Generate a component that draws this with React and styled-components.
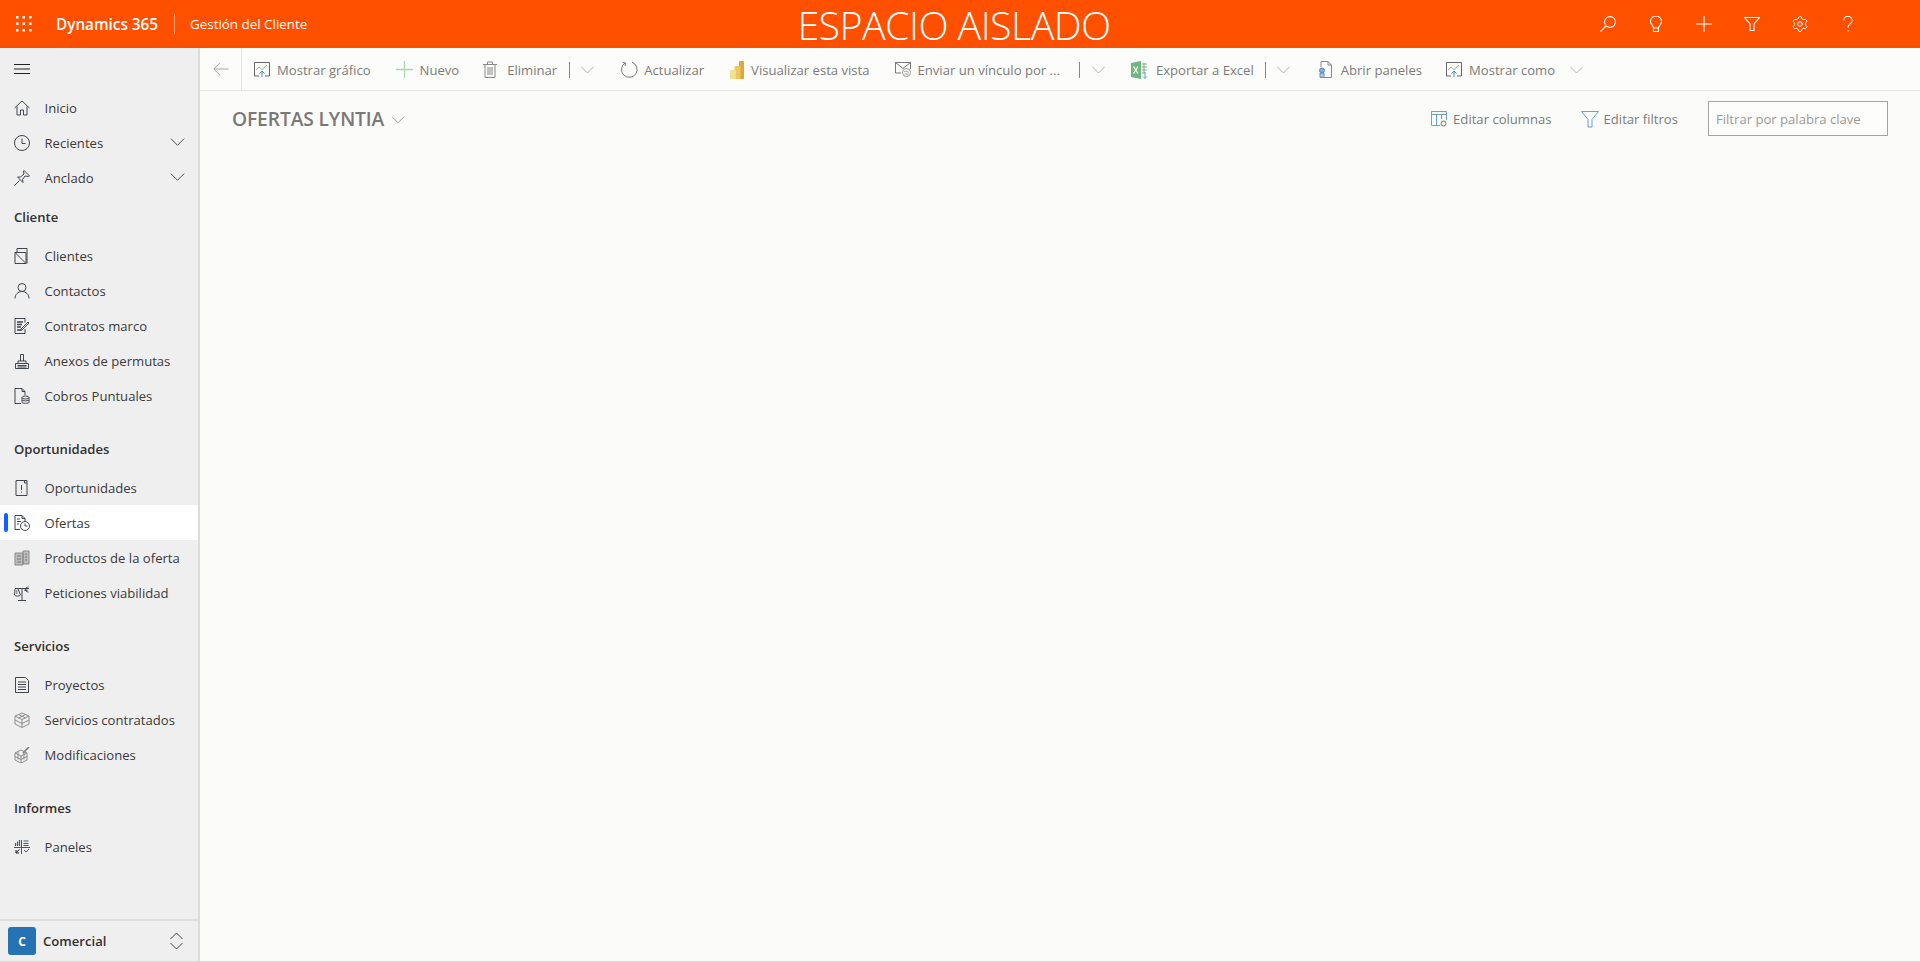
import React from 'react';
import styled, { createGlobalStyle } from 'styled-components';
import { Settings } from 'lucide-react';

const Global = createGlobalStyle`
  html, body { margin: 0; padding: 0; height: 100%; overflow: hidden; }
  body { font-family: "Open Sans", "Noto Sans", sans-serif; background: #faf9f7; }
  #root { height: 962px; }
  * { box-sizing: border-box; }
`;

const Page = styled.div`display:flex;flex-direction:column;width:1920px;height:962px;border-bottom:1px solid #d8d8d8;`;
const Header = styled.header`position:relative;flex:0 0 48px;height:48px;background:#ff5000;color:#fff;display:flex;align-items:center;`;
const Waffle = styled.div`width:48px;height:48px;display:flex;align-items:center;justify-content:center;`;
const Brand = styled.div`font-size:15.3px;font-weight:600;margin-left:8px;width:118px;padding-bottom:1px;`;
const Divider = styled.div`width:1px;height:20px;background:rgba(255,255,255,.45);`;
const AppName = styled.div`font-size:13.4px;margin-left:15px;`;
const Sandbox = styled.div`position:absolute;left:0;width:1920px;top:0;height:48px;line-height:50px;text-align:center;font-size:39.4px;font-weight:300;font-family:"Open Sans",sans-serif;letter-spacing:-.55px;padding-right:12px;`;
const HeaderIcons = styled.div`margin-left:auto;margin-right:48px;display:flex;position:relative;`;
const HeaderIcon = styled.div`width:48px;height:48px;display:flex;align-items:center;justify-content:center;`;

const Body = styled.div`flex:1;display:flex;min-height:0;`;
const Side = styled.nav`width:200px;flex:0 0 200px;background:#efefef;border-right:2px solid #dcdcdc;display:flex;flex-direction:column;color:#323130;`;
const Burger = styled.div`height:42px;padding:0 14px;display:flex;align-items:center;`;
const SideScroll = styled.div`flex:1;`;
const Row = styled.div`position:relative;height:35px;display:flex;align-items:center;padding-left:14px;font-size:13.1px;background:${p=>p.$active?'#fff':'transparent'};color:#3b3a39;`;
const RowIcon = styled.span`width:16px;height:16px;display:flex;margin-right:14.5px;flex:none;color:#40464d;`;
const RowChevron = styled.span`position:absolute;left:169px;top:13px;display:flex;`;
const ActiveBar = styled.span`position:absolute;left:4px;top:8px;width:4px;height:19px;border-radius:2px;background:#0f62fe;`;
const Section = styled.div`height:${p=>p.$h}px;display:flex;align-items:flex-end;padding:0 14px 12px;font-size:13.1px;font-weight:600;color:#323130;`;
const Footer = styled.div`height:42px;flex:none;border-top:2px solid #dedede;display:flex;align-items:center;padding-left:8px;position:relative;font-size:13.1px;font-weight:600;color:#323130;`;
const Avatar = styled.div`width:28px;height:28px;border-radius:3px;background:#2673b4;color:#fff;display:flex;align-items:center;justify-content:center;font-size:12px;font-weight:700;margin-right:7px;`;
const FooterChevrons = styled.span`position:absolute;left:169px;top:11px;display:flex;`;

const Main = styled.main`flex:1;background:#fbfbf9;display:flex;flex-direction:column;min-width:0;`;
const Toolbar = styled.div`height:43px;flex:none;border-bottom:1px solid #e2e1df;display:flex;align-items:center;background:#fcfcfa;`;
const Back = styled.div`width:42px;height:42px;border-right:1px solid #e4e4e4;display:flex;align-items:center;justify-content:center;flex:none;`;
const Cmd = styled.div`display:flex;align-items:center;font-size:13.1px;color:#7d7b79;margin-left:${p=>p.$ml||0}px;padding-top:1px;white-space:nowrap;flex:none;`;
const CmdIcon = styled.span`width:20px;height:20px;display:flex;align-items:center;justify-content:center;margin-right:${p=>p.$mr||4}px;flex:none;`;
const Split = styled.span`width:1px;height:16px;background:#8a8886;margin-left:${p=>p.$ml||12}px;flex:none;`;
const Chev = styled.span`display:flex;margin-left:${p=>p.$ml||10}px;flex:none;`;

const ViewBar = styled.div`height:55px;display:flex;align-items:center;padding-left:32px;padding-right:32px;`;
const Title = styled.div`font-size:19.2px;font-weight:600;color:#7a7876;letter-spacing:-.1px;padding-bottom:1px;`;
const TitleChev = styled.span`display:flex;margin-left:8px;margin-top:2px;`;
const ViewActions = styled.div`margin-left:auto;display:flex;align-items:center;font-size:13.1px;color:#7d7b79;`;
const ViewAction = styled.div`display:flex;align-items:center;margin-right:${p=>p.$mr}px;`;
const Search = styled.div`width:180px;height:35px;border:1px solid #a6a5a3;background:#fdfdfc;padding-left:7px;display:flex;align-items:center;font-size:13.1px;color:#9b9997;`;

const S = ({children, w=16, h=16, vb}) => <svg width={w} height={h} viewBox={vb||`0 0 ${w} ${h}`} fill="none" stroke="currentColor" strokeWidth="1">{children}</svg>;
const ChevronD = ({w=14, c='#5f5e5c'}) => <svg width={w} height={8} viewBox="0 0 16 9" fill="none" stroke={c} strokeWidth="1.1"><path d="M.5.7 8 8.2 15.5.7"/></svg>;

const ic = {
 home:<S><path d="M.5 8 8 1l7.5 7M3 6.5V15h3.5v-5h3v5H13V6.5"/></S>,
 clock:<S><circle cx="8" cy="8" r="7.5"/><path d="M8 3.5V8.5H11.5"/></S>,
 pin:<S><path d="M.5 15.5 5.5 10.5M10 .5 15.5 6l-1 .5L11 6 8.5 9.500 9 12.500 3.500 7l3 0L10 4 9.500 1z"/></S>,
 acct:<S><path d="M1 4.5h11v11H1zM3 4.5V.5h10v11M1 4.5l11 11M13 11v4.500"/></S>,
 person:<S><circle cx="8" cy="4.5" r="4"/><path d="M1 15.5c0-4 3-7 7-7s7 3 7 7"/></S>,
 contract:<S><path d="M1 15V.5h10v4M1 15.5h10V11"/><path d="M3 4h6M3 6.500h5M3 9h4M3 12h4" strokeWidth="1.400"/><path d="M7 11 14 4l1 1-7 7-2 .5z"/></S>,
 annex:<S><path d="M1.5 15.5h13v-5h-13zM4 10.5V8h8v2.500M6.500 8V1.500h3V8"/><path d="M3.500 12.500h9M3.500 14h9" strokeWidth="1.200"/></S>,
 cobros:<S><path d="M1 15.5V.5h7l3 3V7M8 .5v3h3M1 15.5h6"/><ellipse cx="11.5" cy="9.5" rx="3.5" ry="1.5"/><path d="M8 9.5v5c0 1 7 1 7 0v-5M8 12c0 1 7 1 7 0"/></S>,
 opp:<S><path d="M2 .5h11v15H2zM10.5.5v2.5h2.5M7.5 5v5M7.5 11.5v1" /></S>,
 offer:<S><path d="M1 14.5V.5h7l3 3v3M8 .5v3h3M1 14.5h5M3 4h3M3 6.5h4M3 9h2"/><circle cx="11" cy="11" r="4.5"/><path d="M11 8.5V11h2.5"/></S>,
 product:<svg width="16" height="16" viewBox="0 0 16 16"><path d="M1 3h8v12H1zM9 1h6v13H9z" fill="#bdbdbd" stroke="#8a8a8a"/><path d="M3 6h4M3 9h4M3 12h4M11 4h2M11 7h2M11 10h2" stroke="#777"/></svg>,
 balance:<S><path d="M4 15.5h8M8 15V3M1 3.5h14M1 4 .5 10c1 1.5 5 1.5 6 0L4 4M3.5 6H2M3.5 8H2M14.5 2c-2 0-3 1-3 2.500s1 2.500 3 2.500M10.500 4h3M10.500 5.500h3"/></S>,
 doc:<S><path d="M1.500.5h10l3 3v12h-13zM4 5h8M4 7.500h8M4 10h8M4 12.500h8"/></S>,
 box:<svg width="16" height="16" viewBox="0 0 16 16" fill="none" stroke="#8e8e8e"><path d="M8 1 1 4v8l7 3.500L15 12V4zM1 4l7 3.500L15 4M8 7.500v8M4.500 2.500l7 3.500M11.500 2.500 4.500 6M1 8l7 3.500L15 8"/></svg>,
 mod:<svg width="16" height="16" viewBox="0 0 16 16" fill="none" stroke="#8e8e8e"><path d="M7 3 1 6v7l6 3 6-3V6zM1 6l6 3 6-3M7 9v7M4 4.500v8M10 4.500v8M1 9.500l6 3 6-3"/><path d="M9 6l6-6" stroke="#777" strokeWidth="1.500"/></svg>,
 dash:<svg width="16" height="16" viewBox="0 0 16 16" fill="none" stroke="#3c5a78"><path d="M0 8.500h16M7.500 1v14"/><path d="M1.500 7V4M3.500 7V2.500M5.500 7V1" strokeWidth="1.200"/><path d="M9.500 2h5M9.500 4.500h5M9.500 6.500h5" /><path d="M5.500 10.500 2 13.500M2 11v3h3" stroke="#222"/><path d="M10 11l2 2 3-3" /></svg>,
};

const Nav = ({icon, label, active, chevron}) => (
  <Row $active={active}>
    {active && <ActiveBar/>}
    <RowIcon>{ic[icon]}</RowIcon>
    {label}
    {chevron && <RowChevron><ChevronD w={17} c="#505050"/></RowChevron>}
  </Row>
);

const Chart = () => <svg width="16" height="16" viewBox="0 0 16 16" fill="none"><path d="M5 14H.5V.5h15V14H11" stroke="#666"/><path d="M2 8l3-3 3 2.500L13 3" stroke="#79c28a"/><path d="M8 15V9M5.500 11.500 8 9l2.500 2.500" stroke="#4a90d0"/></svg>;

const App = () => (
  <Page>
    <Global/>
    <Header>
      <Sandbox>ESPACIO AISLADO</Sandbox>
      <Waffle>
        <svg width="16" height="16" viewBox="0 0 16 16" fill="#fff">
          {[0,6.500,13].flatMap(y=>[0,6.500,13].map(x=><rect key={`${x}-${y}`} x={x} y={y} width="2.500" height="2.500"/>))}
        </svg>
      </Waffle>
      <Brand>Dynamics 365</Brand>
      <Divider/>
      <AppName>Gestión del Cliente</AppName>
      <HeaderIcons>
        <HeaderIcon><svg width="16" height="16" viewBox="0 0 16 16" fill="none" stroke="#fff" strokeWidth="1.100"><circle cx="10" cy="6" r="5.400"/><path d="M6 10 .5 15.500"/></svg></HeaderIcon>
        <HeaderIcon><svg width="12" height="16" viewBox="0 0 12 16" fill="none" stroke="#fff" strokeWidth="1.100"><path d="M3.500 12C3 9 .5 8.500.5 5.500a5.500 5.500 0 0 1 11 0c0 3-2.500 3.500-3 6.500zM3.500 12v3.500h5V12"/></svg></HeaderIcon>
        <HeaderIcon><svg width="16" height="16" viewBox="0 0 16 16" stroke="#fff" strokeWidth="1.200"><path d="M0 8h16M8 0v16"/></svg></HeaderIcon>
        <HeaderIcon><svg width="16" height="14" viewBox="0 0 16 14" fill="none" stroke="#fff" strokeWidth="1.100"><path d="M.5.500h15L10 7v6.500H6V7z"/></svg></HeaderIcon>
        <HeaderIcon><Settings size={18} color="#fff" strokeWidth={1.3}/></HeaderIcon>
        <HeaderIcon><svg width="10" height="16" viewBox="0 0 10 16" fill="none" stroke="#fff" strokeWidth="1.100"><path d="M.6 4.500a4.200 4.200 0 1 1 7 3C6 9 5 9.500 5 11.500M5 14v1.500"/></svg></HeaderIcon>
      </HeaderIcons>
    </Header>
    <Body>
      <Side>
        <Burger><svg width="16" height="10" viewBox="0 0 16 10" stroke="#222"><path d="M0 .5h16M0 5h16M0 9.500h16"/></svg></Burger>
        <SideScroll>
          <Nav icon="home" label="Inicio"/>
          <Nav icon="clock" label="Recientes" chevron/>
          <Nav icon="pin" label="Anclado" chevron/>
          <Section $h={43}>Cliente</Section>
          <Nav icon="acct" label="Clientes"/>
          <Nav icon="person" label="Contactos"/>
          <Nav icon="contract" label="Contratos marco"/>
          <Nav icon="annex" label="Anexos de permutas"/>
          <Nav icon="cobros" label="Cobros Puntuales"/>
          <Section $h={57}>Oportunidades</Section>
          <Nav icon="opp" label="Oportunidades"/>
          <Nav icon="offer" label="Ofertas" active/>
          <Nav icon="product" label="Productos de la oferta"/>
          <Nav icon="balance" label="Peticiones viabilidad"/>
          <Section $h={57}>Servicios</Section>
          <Nav icon="doc" label="Proyectos"/>
          <Nav icon="box" label="Servicios contratados"/>
          <Nav icon="mod" label="Modificaciones"/>
          <Section $h={57}>Informes</Section>
          <Nav icon="dash" label="Paneles"/>
        </SideScroll>
        <Footer>
          <Avatar>C</Avatar>Comercial
          <FooterChevrons><svg width="15" height="18" viewBox="0 0 15 18" fill="none" stroke="#444"><path d="M1.500 7 7.500 1l6 6M1.500 11l6 6 6-6"/></svg></FooterChevrons>
        </Footer>
      </Side>
      <Main>
        <Toolbar>
          <Back><svg width="16" height="14" viewBox="0 0 16 14" fill="none" stroke="#a6a6a6"><path d="M15.500 7H1M7 .8.800 7 7 13.200"/></svg></Back>
          <Cmd $ml={10}><CmdIcon $mr={5}><Chart/></CmdIcon>Mostrar gráfico</Cmd>
          <Cmd $ml={24}><CmdIcon $mr={5}><svg width="17" height="17" viewBox="0 0 17 17" stroke="#a8d8b4" strokeWidth="1.300"><path d="M0 8.500h17M8.500 0v17"/></svg></CmdIcon>Nuevo</Cmd>
          <Cmd $ml={21}><CmdIcon $mr={7}><svg width="14" height="17" viewBox="0 0 14 17" fill="none" stroke="#888"><path d="M0 3.500h14M2 3.500v13h10v-13M4.500 3.500V1h5v2.500M5 6v8M7 6v8M9 6v8"/></svg></CmdIcon>Eliminar<Split/><Chev $ml={11}><ChevronD w={13} c="#a9a8a6"/></Chev></Cmd>
          <Cmd $ml={25}><CmdIcon $mr={5}><svg width="17" height="17" viewBox="0 0 17 17" fill="none" stroke="#777"><path d="M11 1.200A7.800 7.800 0 1 1 4 2M1.500 1.500 4.500 2l-.5 3"/></svg></CmdIcon>Actualizar</Cmd>
          <Cmd $ml={23}><CmdIcon $mr={4}><svg width="14" height="18" viewBox="0 0 14 18"><rect x="9" y="0" width="5" height="18" rx="1" fill="#d9a93e"/><rect x="4.500" y="5" width="6" height="13" rx="1" fill="#ecc85e"/><rect x="0" y="9" width="6" height="9" rx="1" fill="#f5e08f"/></svg></CmdIcon>Visualizar esta vista</Cmd>
          <Cmd $ml={24}><CmdIcon $mr={4}><svg width="17" height="15" viewBox="0 0 17 15" fill="none" stroke="#777"><path d="M6 11H.5V.5h15V7M.5.500 8 6.500 15.500.5"/><circle cx="11.500" cy="10.500" r="4" stroke="#999"/><path d="M9 10c2-2 4 1 5 0M9.500 12c2-1 3 1 4 0" stroke="#999"/></svg></CmdIcon>Enviar un vínculo por ...<Split $ml={19}/><Chev $ml={12}><ChevronD w={13} c="#a9a8a6"/></Chev></Cmd>
          <Cmd $ml={25}><CmdIcon $mr={6}><svg width="18" height="18" viewBox="0 0 18 18"><path d="M0 2 10 0v18L0 16z" fill="#6fb67f"/><path d="M2.500 5.500l4.500 7M7 5.500l-4.500 7" stroke="#fff" strokeWidth="1.300"/><path d="M11 3h5M11 6h5M11 9h5M11 12h3M13 2v10" stroke="#7fae8c" fill="none"/><path d="M14 11v6M12 15.500l2 2 2-2" stroke="#5b9ad5" fill="none"/></svg></CmdIcon>Exportar a Excel<Split $ml={11}/><Chev $ml={11}><ChevronD w={13} c="#a9a8a6"/></Chev></Cmd>
          <Cmd $ml={26}><CmdIcon $mr={5}><svg width="13" height="17" viewBox="0 0 13 17" fill="none" stroke="#888"><path d="M5 16.500h7.500V4l-3.500-3.500H2V6M9 .5V4h3.500"/><circle cx="3" cy="9.500" r="2.500" fill="#7fb0dc" stroke="#5b90c0"/><path d="M1 12h4v4.500H1z" fill="#a9cbe8" stroke="#5b90c0"/></svg></CmdIcon>Abrir paneles</Cmd>
          <Cmd $ml={22}><CmdIcon $mr={5}><Chart/></CmdIcon>Mostrar como<Chev $ml={15}><ChevronD w={13} c="#a9a8a6"/></Chev></Cmd>
        </Toolbar>
        <ViewBar>
          <Title>OFERTAS LYNTIA</Title>
          <TitleChev><ChevronD w={12} c="#8a8886"/></TitleChev>
          <ViewActions>
            <ViewAction $mr={28}>
              <CmdIcon $mr={4}><svg width="16" height="16" viewBox="0 0 16 16" fill="none" stroke="#6f9fcf"><path d="M9 14.500H.5V.5h15V9M.5 3.500h15M5.500 3.500v11M10.500 3.500V8"/><circle cx="12.500" cy="12.500" r="2.500" stroke="#777"/></svg></CmdIcon>Editar columnas
            </ViewAction>
            <ViewAction $mr={30}>
              <CmdIcon $mr={4}><svg width="18" height="18" viewBox="0 0 18 18" fill="none" stroke="#6f9fcf"><path d="M.5 1.500h17L11 9.500v7.500H7V9.500z"/></svg></CmdIcon>Editar filtros
            </ViewAction>
            <Search>Filtrar por palabra clave</Search>
          </ViewActions>
        </ViewBar>
      </Main>
    </Body>
  </Page>
);
export default App;
